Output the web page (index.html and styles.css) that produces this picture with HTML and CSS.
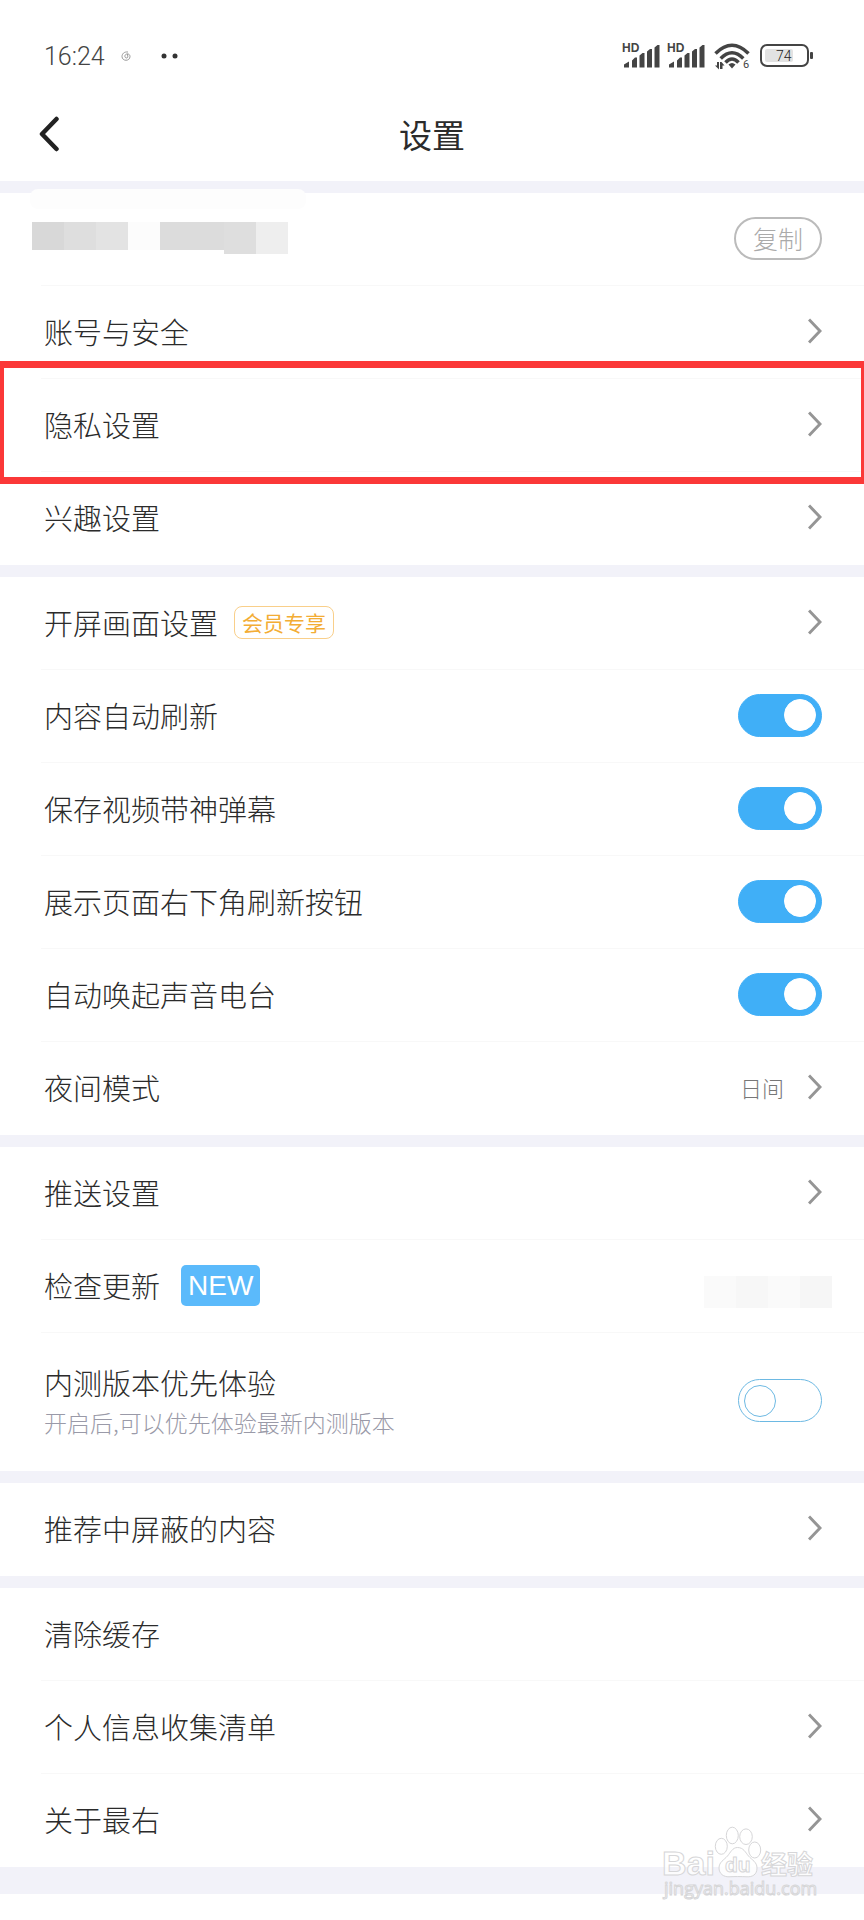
FILE: index.html
```html
<!DOCTYPE html>
<html lang="zh">

<head>
    <meta charset="UTF-8">
    <meta name="viewport" content="width=device-width, initial-scale=1.0">
    <title>设置</title>
    <link rel="stylesheet" href="styles.css">
</head>

<body>
    <svg class="symbols" aria-hidden="true">
        <symbol id="arrow" viewBox="0 0 14 26">
            <path d="M1 1.500 12 13 1 24.500" fill="none" stroke="#959595" stroke-width="3" />
        </symbol>
        <symbol id="signal" viewBox="0 0 40 28">
            <text x="0" y="10" class="signal-hd">HD</text>
            <path fill="#444" d="M2 25.500v-3l5-3v6zM10 25.500v-7l3-3h2v10zM17.500 25.500v-12l3-2.500h2v14.500zM25 25.500V9.500L28 7h2v18.500zM32.500 25.500v-20l3-2.500h2v22.500z" />
        </symbol>
    </svg>

    <div class="status-bar">
        <div class="status-left">
            <span class="time">16:24</span>
            <svg class="swirl" viewBox="0 0 10 10" width="10" height="10" fill="none" stroke="#999" stroke-width="1">
                <path d="M7 1C3 .5 1 3 1 5.500c0 5 8 5 8 0 0-3-4-3.500-5-1-.8 2.500 2.500 3.500 2.800 1.300L6.500 3" />
            </svg>
            <svg class="dots" viewBox="0 0 18 6" width="18" height="6" fill="#333">
                <circle cx="3" cy="3" r="2.500" />
                <circle cx="14" cy="3" r="2.500" />
            </svg>
        </div>
        <div class="status-right">
            <svg width="40" height="28"><use href="#signal" /></svg>
            <svg width="40" height="28"><use href="#signal" /></svg>
            <svg viewBox="-2 0 42 28" width="42" height="28">
                <g fill="none" stroke="#444" stroke-width="3.500">
                    <path d="M1.500 11.500Q18 -5 34.500 11.500" />
                    <path d="M6.700 16.500Q18 5 29.300 16.500" />
                    <path d="M11.500 20.500Q18 13.500 24.500 20.500" />
                </g>
                <path d="M14.500 22.500q3.500-3 7 0L18 26.500z" fill="#444" />
                <path d="M1 23.500h2V20h2v7.500zM6 20h1.500l3 3.500h-2V27H6z" fill="#444" />
                <text x="29" y="26" class="wifi-no">6</text>
            </svg>
            <svg viewBox="0 0 54 28" width="54" height="28">
                <rect x="2" y="3" width="47" height="21" rx="6" fill="#fff" stroke="#444" stroke-width="2" />
                <rect x="6" y="7" width="28" height="13" rx="2" fill="#e2e2e2" />
                <rect x="51" y="10" width="3" height="7" rx="1" fill="#444" />
                <text x="17" y="19" class="battery-no">74</text>
            </svg>
        </div>
    </div>

    <header class="nav">
        <button class="back" aria-label="返回">
            <svg viewBox="0 0 22 36" width="22" height="36">
                <path d="M18.500 3 4 18l14.500 15" fill="none" stroke="#222" stroke-width="4.500" stroke-linecap="round" stroke-linejoin="round" />
            </svg>
        </button>
        <h1>设置</h1>
    </header>

    <main>
        <section class="group">
            <div class="row row-id">
                <div class="mosaic">
                    <i class="c1"></i><i class="c2"></i><i class="c3"></i><i class="c4"></i><i class="c5"></i><i class="c5"></i><i class="c6"></i><i class="c7"></i>
                </div>
                <button class="copy">复制</button>
            </div>
            <a class="row" href="#">账号与安全<svg class="arrow"><use href="#arrow" /></svg></a>
            <a class="row marked" href="#">隐私设置<svg class="arrow"><use href="#arrow" /></svg></a>
            <a class="row" href="#">兴趣设置<svg class="arrow"><use href="#arrow" /></svg></a>
        </section>

        <section class="group">
            <a class="row" href="#">开屏画面设置<span class="vip">会员专享</span><svg class="arrow"><use href="#arrow" /></svg></a>
            <label class="row">内容自动刷新<input type="checkbox" class="switch" checked></label>
            <label class="row">保存视频带神弹幕<input type="checkbox" class="switch" checked></label>
            <label class="row">展示页面右下角刷新按钮<input type="checkbox" class="switch" checked></label>
            <label class="row">自动唤起声音电台<input type="checkbox" class="switch" checked></label>
            <a class="row" href="#">夜间模式<span class="value">日间</span><svg class="arrow"><use href="#arrow" /></svg></a>
        </section>

        <section class="group">
            <a class="row" href="#">推送设置<svg class="arrow"><use href="#arrow" /></svg></a>
            <a class="row row-update" href="#">检查更新<span class="new">NEW</span>
                <span class="mosaic pale"><i class="p1"></i><i class="p2"></i><i class="p1"></i><i class="p3"></i></span>
            </a>
            <label class="row row-beta">
                <span class="text">
                    <span class="name">内测版本优先体验</span>
                    <span class="desc">开启后,可以优先体验最新内测版本</span>
                </span>
                <input type="checkbox" class="switch">
            </label>
        </section>

        <section class="group">
            <a class="row" href="#">推荐中屏蔽的内容<svg class="arrow"><use href="#arrow" /></svg></a>
        </section>

        <section class="group">
            <a class="row" href="#">清除缓存</a>
            <a class="row" href="#">个人信息收集清单<svg class="arrow"><use href="#arrow" /></svg></a>
            <a class="row" href="#">关于最右<svg class="arrow"><use href="#arrow" /></svg></a>
        </section>
    </main>

    <footer class="footer">
        <svg class="watermark" viewBox="0 0 160 84" width="160" height="84">
            <g fill="#fff" fill-opacity="0.8" stroke="#d6d6d8" stroke-width="1">
                <text x="2" y="55" class="wm-bai">Bai</text>
                <ellipse cx="61.300" cy="26.300" rx="6" ry="8" />
                <ellipse cx="72.300" cy="15.500" rx="6" ry="8.300" />
                <ellipse cx="86" cy="16.700" rx="6.300" ry="7.800" />
                <ellipse cx="94.700" cy="30" rx="6" ry="8" />
                <path d="M77.500 27.500c6 0 8 5 11 8.500 3.500 4 8.500 6 8.500 12 0 7-5 9-10 8.800-6-.3-13-.3-18 0-5 .2-10-2.800-10-8.800 0-6 5-8 8.500-12 3-3.500 5-8.500 10-8.500z" />
                <text x="65" y="52" class="wm-du">du</text>
                <text x="101" y="54" class="wm-jy">经验</text>
                <text x="4" y="75" class="wm-url">jingyan.baidu.com</text>
            </g>
        </svg>
    </footer>
</body>

</html>
```
FILE: styles.css
```css
:root {
    --text-color: #2b2b2b;
    --gap-color: #f2f2f9;
    --line-color: #f8f8f8;
    --blue: #40aff7;
}

* {
    box-sizing: border-box;
}

body {
    margin: 0;
    background: #fff;
    color: var(--text-color);
    font-family: "Noto Sans CJK SC", sans-serif;
    font-weight: 300;
}

.symbols {
    display: none;
}

/* 状态栏 */
.status-bar {
    display: flex;
    justify-content: space-between;
    align-items: center;
    height: 88px;
    padding: 24px 51px 0 44px;
}

.status-left,
.status-right {
    display: flex;
    align-items: center;
}

.time {
    font-family: Roboto, sans-serif;
    font-size: 25px;
    color: #444;
}

.swirl {
    margin-left: 16px;
}

.dots {
    margin-left: 30px;
}

.status-right {
    gap: 5px;
}

.signal-hd {
    font: bold 12px "Liberation Sans", sans-serif;
    fill: #444;
}

.wifi-no {
    font: 11px Roboto, sans-serif;
    fill: #444;
}

.battery-no {
    font: 300 14px Roboto, sans-serif;
    fill: #222;
}

/* 标题栏 */
.nav {
    display: grid;
    grid-template-columns: 1fr auto 1fr;
    align-items: center;
    height: 93px;
    padding: 0 38px 2px;
}

.back {
    justify-self: start;
    display: flex;
    padding: 0;
    border: none;
    background: none;
}

.nav h1 {
    margin: 0;
    font-size: 33px;
    font-weight: 400;
    line-height: 48px;
}

/* 列表 */
.group {
    border-top: 12px solid var(--gap-color);
    padding-left: 41px;
}

.row {
    position: relative;
    display: flex;
    align-items: center;
    height: 93px;
    padding: 0 42px 2px 3px;
    border-bottom: 1px solid var(--line-color);
    color: var(--text-color);
    font-size: 29px;
    text-decoration: none;
}

.row:last-child {
    border-bottom-color: transparent;
}

.arrow {
    width: 14px;
    height: 26px;
    margin-left: auto;
}

.marked::after {
    content: "";
    position: absolute;
    inset: -18px 0 -13px -41px;
    z-index: 1;
    border: solid #fb3838;
    border-width: 7px 3px 7px 4px;
}

.copy {
    width: 88px;
    height: 43px;
    margin-left: auto;
    padding: 0;
    border: 2px solid #bbb;
    border-radius: 22px;
    background: #fff;
    color: #aaa;
    font: 300 25px "Noto Sans CJK SC", sans-serif;
    line-height: 36px;
}

.vip {
    margin-left: 16px;
    padding: 0 7px;
    border: 1px solid #f9cf8a;
    border-radius: 8px;
    color: #f3ad35;
    font-size: 21px;
    font-weight: 400;
    line-height: 31px;
}

.value {
    margin-left: auto;
    color: #777;
    font-size: 22px;
}

.value + .arrow {
    margin-left: 24px;
}

.new {
    margin-left: 21px;
    padding: 0 7px;
    border-radius: 5px;
    background: #5bbafb;
    color: #fff;
    font-family: "Liberation Sans", sans-serif;
    font-size: 28px;
    line-height: 41px;
}

.row-beta {
    height: 138px;
}

.name,
.desc {
    display: block;
    line-height: 42px;
}

.desc {
    color: #9a9aa8;
    font-size: 23px;
    line-height: 38px;
}

/* 开关 */
.switch {
    appearance: none;
    display: flex;
    align-items: center;
    width: 84px;
    height: 43px;
    margin: 0 0 0 auto;
    padding: 0 5px;
    border: 1px solid #6db9e3;
    border-radius: 22px;
    background: #fff;
}

.switch::before {
    content: "";
    width: 30px;
    height: 30px;
    border: 1px solid #6db9e3;
    border-radius: 50%;
    background: #fff;
}

.switch:checked {
    justify-content: flex-end;
    border-color: var(--blue);
    background: var(--blue);
}

.switch:checked::before {
    border-color: #fff;
}

/* 马赛克 */
.row-id {
    padding-left: 0;
}

.row-id::before {
    content: "";
    position: absolute;
    top: -4px;
    left: -11px;
    width: 276px;
    height: 20px;
    border-radius: 8px;
    background: #fdfdfd;
}

.mosaic {
    display: flex;
    margin-left: -9px;
}

.mosaic i {
    width: 32px;
    height: 28px;
}

.mosaic .c1 {
    background: #d8d8d8;
}

.mosaic .c2 {
    background: #dedede;
}

.mosaic .c3 {
    background: #e3e3e3;
}

.mosaic .c4 {
    background: #fcfcfc;
}

.mosaic .c5 {
    background: #dcdcdc;
}

.mosaic .c6 {
    height: 32px;
    background: #dedede;
}

.mosaic .c7 {
    height: 32px;
    background: #eee;
}

.row-update {
    padding-right: 32px;
}

.pale {
    margin: 14px 0 0 auto;
}

.pale i {
    height: 32px;
}

.pale .p1 {
    background: #fafafa;
}

.pale .p2 {
    background: #f7f7f7;
}

.pale .p3 {
    background: #f6f6f6;
}

/* 底部 */
.footer {
    position: relative;
    height: 27px;
    margin-bottom: 26px;
    background: var(--gap-color);
}

.watermark {
    position: absolute;
    top: -47px;
    right: 44px;
}

.wm-bai {
    font: bold 34px "Liberation Sans", sans-serif;
}

.wm-du {
    font: bold 21px "Liberation Sans", sans-serif;
}

.wm-jy {
    font: bold 26px "Noto Sans CJK SC", sans-serif;
}

.wm-url {
    font: 18px "Open Sans", sans-serif;
}
```
